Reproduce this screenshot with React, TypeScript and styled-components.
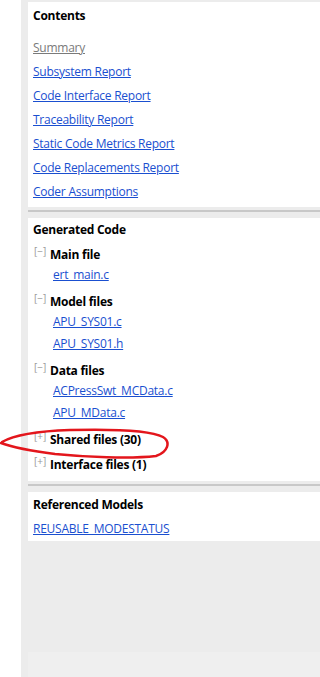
import React from "react";
import styled, { createGlobalStyle } from "styled-components";

const GlobalStyle = createGlobalStyle`
  html, body { margin: 0; padding: 0; background: #ffffff; }
  body { font-family: "Open Sans", "Noto Sans", Arial, sans-serif; font-size: 12px; letter-spacing: -0.25px; }
  * { box-sizing: border-box; }
`;

const Page = styled.div`
  position: relative;
  display: flex;
  width: 320px;
  height: 677px;
  overflow: hidden;
  background: #ffffff;
`;

const LeftStrip = styled.div`
  width: 21px;
  flex: none;
  background: #ffffff;
`;

const Main = styled.div`
  flex: 1;
  display: flex;
  flex-direction: column;
  background: #ececec;
  padding: 2px 0 0 7px;
`;

const Card = styled.section<{ $pt: number; $pb: number }>`
  background: #ffffff;
  padding: ${(p) => p.$pt}px 0 ${(p) => p.$pb}px 5px;
  display: flex;
  flex-direction: column;
`;

const Title = styled.div<{ $mb: number }>`
  font-weight: 700;
  color: #000000;
  line-height: 16px;
  margin-bottom: ${(p) => p.$mb}px;
`;

const LinkRow = styled.div`
  height: 24px;
  line-height: 24px;
`;

const Link = styled.a<{ $muted?: boolean }>`
  color: ${(p) => (p.$muted ? "#7a7a7a" : "#1a4fd0")};
  text-decoration: underline;
  cursor: pointer;
`;

const Separator = styled.div`
  height: 2px;
  margin: 3px 0 6px;
  background: #c8c8c8;
`;

const Group = styled.div`
  display: flex;
  flex-direction: column;
  margin-bottom: 5px;
`;

const GroupHeader = styled.div`
  height: 20px;
  display: flex;
  align-items: center;
  padding-left: 1px;
`;

const Toggle = styled.span`
  flex: none;
  font-size: 10px;
  color: #9a9a9a;
  width: 16px;
  position: relative;
  top: -3px;
  letter-spacing: 0;
`;

const GroupLabel = styled.span`
  font-weight: 700;
  color: #000000;
`;

const FileRow = styled.div`
  height: 22px;
  line-height: 22px;
  padding-left: 20px;
`;

const Filler = styled.div`
  flex: 1;
`;

const BottomBand = styled.div`
  height: 25px;
  background: #efefef;
`;

const Annotation = styled.svg`
  position: absolute;
  left: 0;
  top: 424px;
  width: 172px;
  height: 40px;
  pointer-events: none;
`;

const contents = [
  "Subsystem Report",
  "Code Interface Report",
  "Traceability Report",
  "Static Code Metrics Report",
  "Code Replacements Report",
  "Coder Assumptions",
];

type GroupData = { label: string; open: boolean; files: string[] };

const groups: GroupData[] = [
  { label: "Main file", open: true, files: ["ert_main.c"] },
  { label: "Model files", open: true, files: ["APU_SYS01.c", "APU_SYS01.h"] },
  { label: "Data files", open: true, files: ["ACPressSwt_MCData.c", "APU_MData.c"] },
  { label: "Shared files (30)", open: false, files: [] },
  { label: "Interface files (1)", open: false, files: [] },
];

export default function App() {
  return (
    <Page>
      <GlobalStyle />
      <LeftStrip />
      <Main>
        <Card $pt={6} $pb={3}>
          <Title $mb={12}>Contents</Title>
          <LinkRow>
            <Link $muted>Summary</Link>
          </LinkRow>
          {contents.map((c) => (
            <LinkRow key={c}>
              <Link>{c}</Link>
            </LinkRow>
          ))}
        </Card>
        <Separator />
        <Card $pt={4} $pb={2}>
          <Title $mb={6}>Generated Code</Title>
          {groups.map((g) => (
            <Group key={g.label}>
              <GroupHeader>
                <Toggle>{g.open ? "[−]" : "[+]"}</Toggle>
                <GroupLabel>{g.label}</GroupLabel>
              </GroupHeader>
              {g.files.map((f) => (
                <FileRow key={f}>
                  <Link>{f}</Link>
                </FileRow>
              ))}
            </Group>
          ))}
        </Card>
        <Separator />
        <Card $pt={5} $pb={0}>
          <Title $mb={4}>Referenced Models</Title>
          <LinkRow>
            <Link>REUSABLE_MODESTATUS</Link>
          </LinkRow>
        </Card>
        <Filler />
        <BottomBand />
      </Main>
      <Annotation viewBox="0 0 172 40">
        <path
          d="M2 18 C 14 11, 40 7, 70 6 C 110 5, 150 6, 163 13 C 171 18, 168 28, 156 32 C 130 35, 85 33, 55 30 C 32 27, 12 23, 1 19"
          fill="none"
          stroke="#e3161c"
          strokeWidth="2.5"
          strokeLinecap="round"
        />
      </Annotation>
    </Page>
  );
}
